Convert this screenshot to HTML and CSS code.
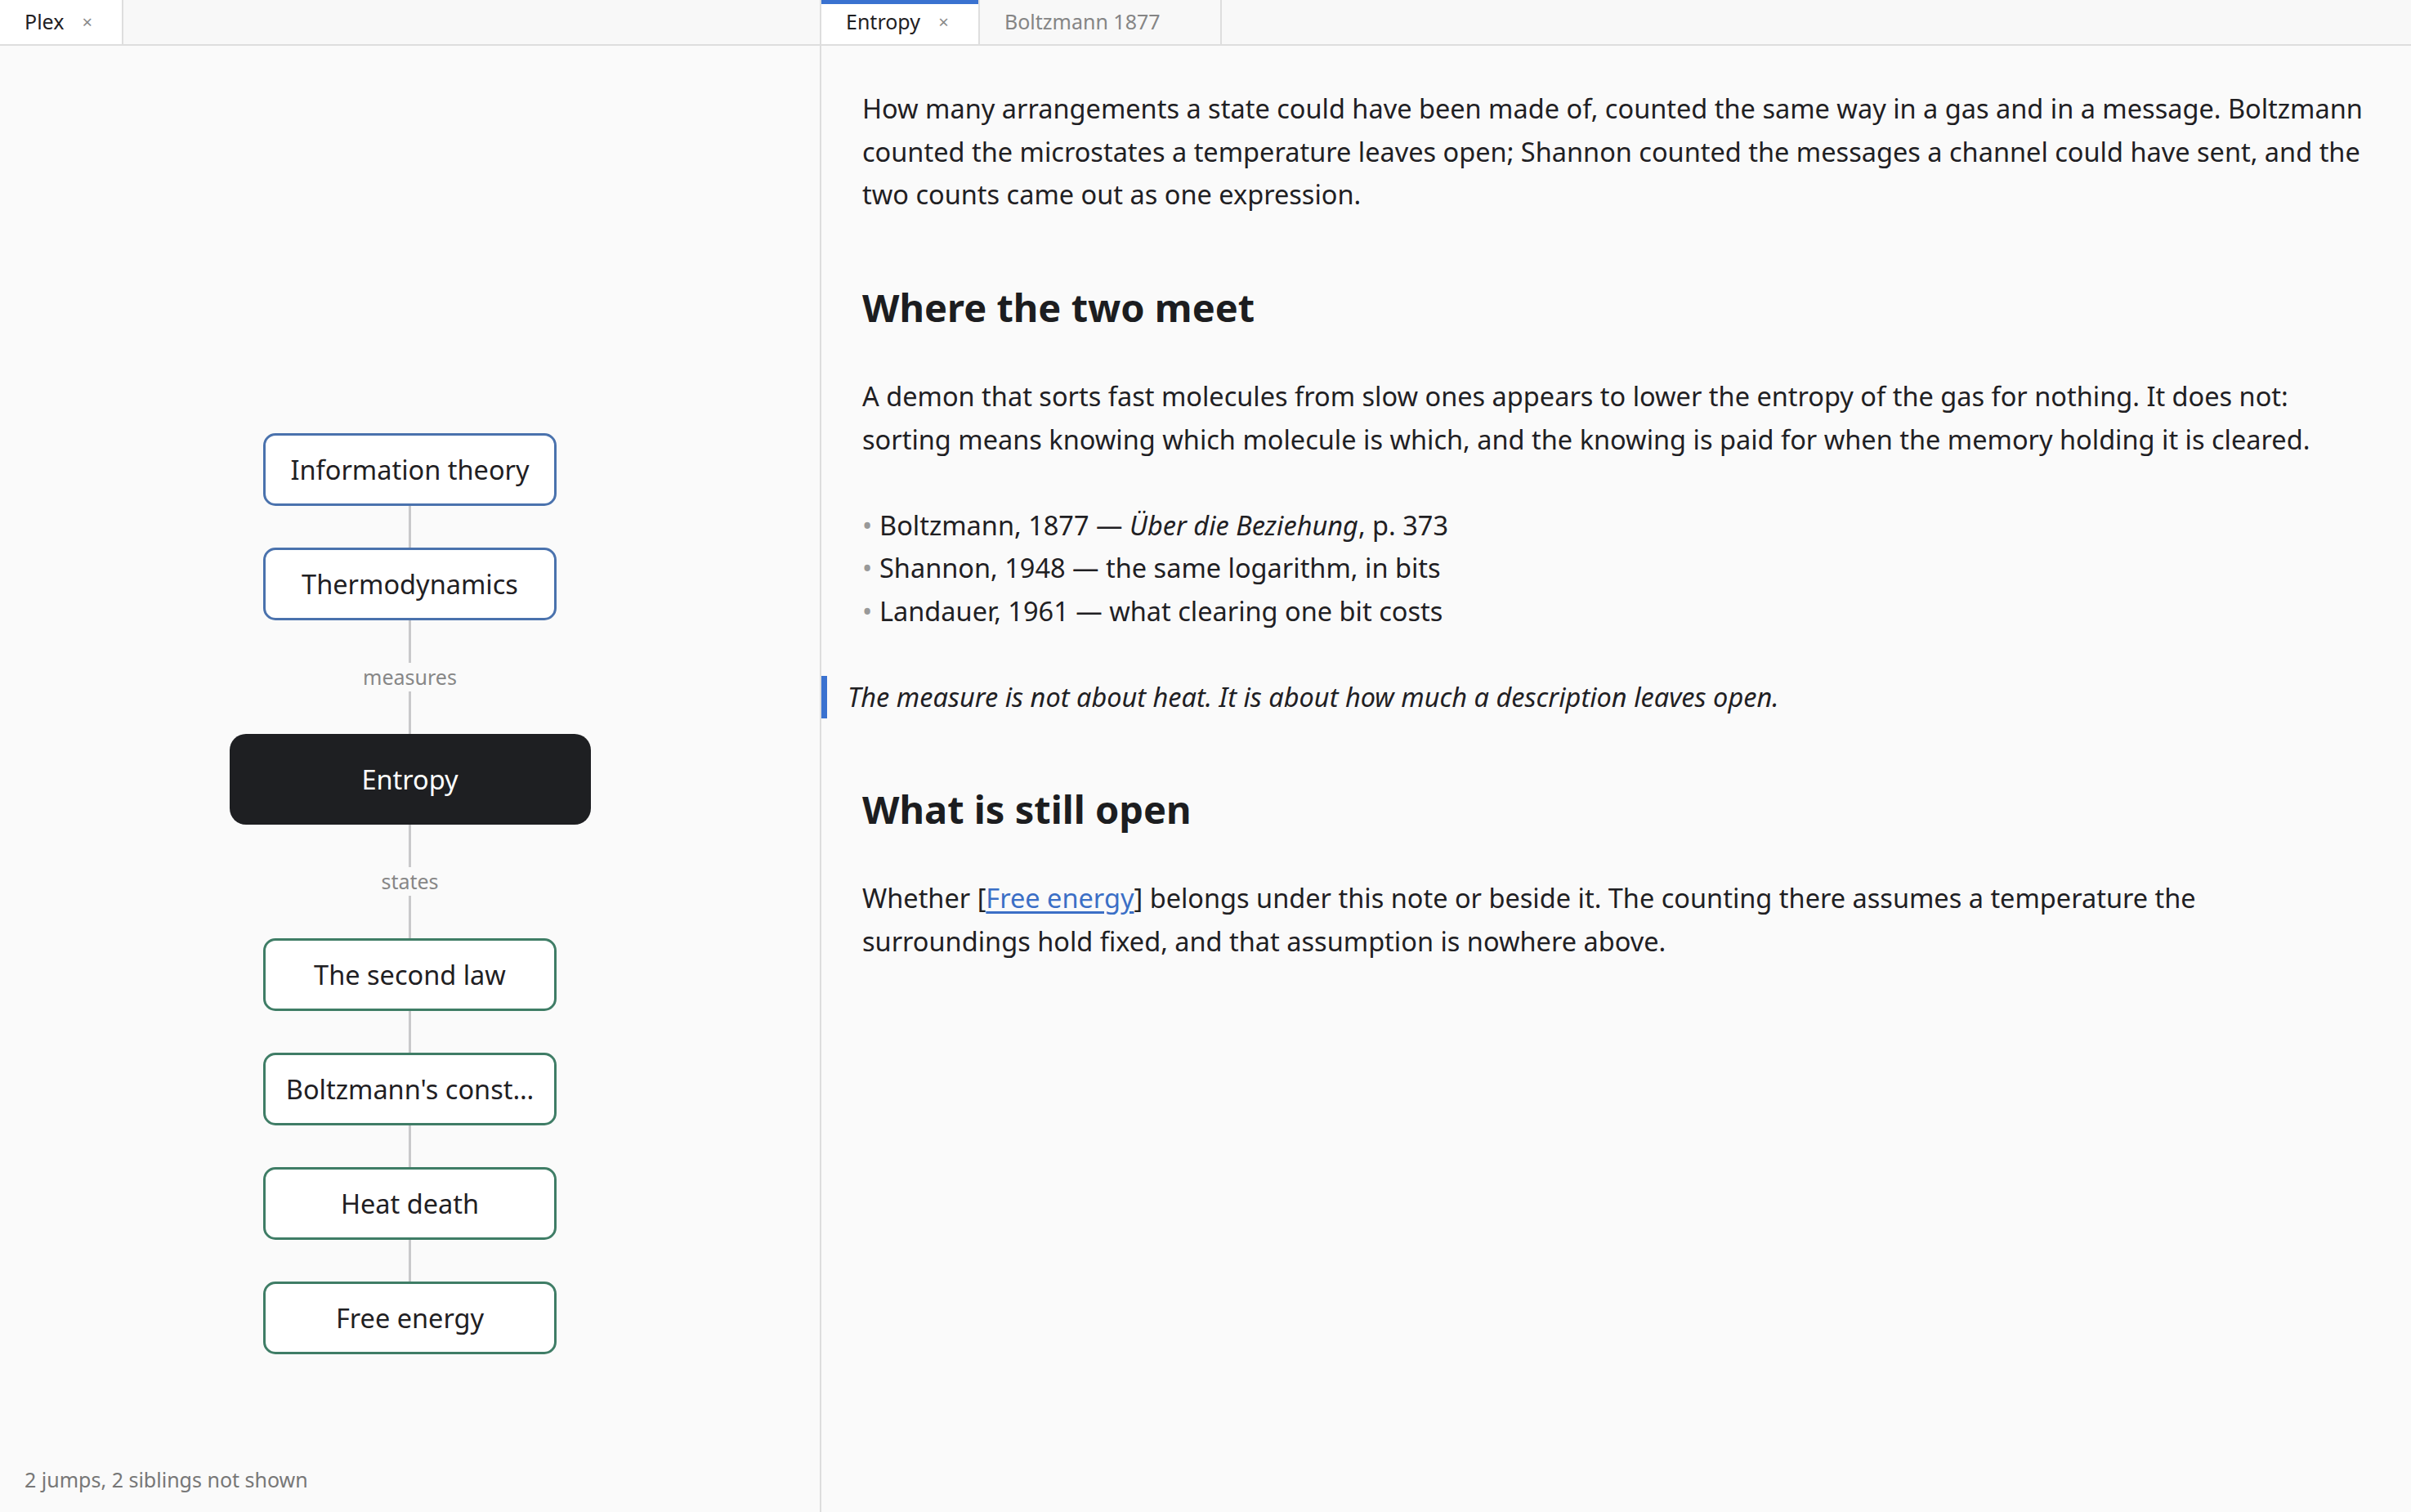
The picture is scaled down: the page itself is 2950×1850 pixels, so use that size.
FILE: index.html
```html
<!DOCTYPE html>
<html lang="en">
<head>
<meta charset="utf-8">
<title>Plex — Entropy</title>
<link rel="stylesheet" href="styles.css">
</head>
<body>
<div class="app">
  <aside class="pane pane-graph">
    <div class="tabbar">
      <div class="tab tab-open">
        <span class="tab-label">Plex</span>
        <span class="tab-close">×</span>
      </div>
    </div>
    <div class="graph">
      <div class="graph-up">
        <div class="node node-parent">Information theory</div>
        <div class="edge"></div>
        <div class="node node-parent">Thermodynamics</div>
        <div class="edge edge-long"></div>
        <div class="edge-label">measures</div>
        <div class="edge edge-long"></div>
      </div>
      <div class="graph-focus">
        <div class="node node-focus">Entropy</div>
      </div>
      <div class="graph-down">
        <div class="edge edge-long"></div>
        <div class="edge-label">states</div>
        <div class="edge edge-long"></div>
        <div class="node node-child">The second law</div>
        <div class="edge"></div>
        <div class="node node-child">Boltzmann's const…</div>
        <div class="edge"></div>
        <div class="node node-child">Heat death</div>
        <div class="edge"></div>
        <div class="node node-child">Free energy</div>
        <div class="graph-footer">2 jumps, 2 siblings not shown</div>
      </div>
    </div>
  </aside>
  <main class="pane pane-note">
    <div class="tabbar">
      <div class="tab tab-open tab-active">
        <span class="tab-label">Entropy</span>
        <span class="tab-close">×</span>
      </div>
      <div class="tab">
        <span class="tab-label">Boltzmann 1877</span>
        <span class="tab-close tab-close-hidden">×</span>
      </div>
    </div>
    <article class="note">
      <p>How many arrangements a state could have been made of, counted the same way in a gas and in a message. Boltzmann counted the microstates a temperature leaves open; Shannon counted the messages a channel could have sent, and the two counts came out as one expression.</p>
      <h2>Where the two meet</h2>
      <p>A demon that sorts fast molecules from slow ones appears to lower the entropy of the gas for nothing. It does not: sorting means knowing which molecule is which, and the knowing is paid for when the memory holding it is cleared.</p>
      <ul class="refs">
        <li><span class="bullet">•</span>Boltzmann, 1877 — <em>Über die Beziehung</em>, p. 373</li>
        <li><span class="bullet">•</span>Shannon, 1948 — the same logarithm, in bits</li>
        <li><span class="bullet">•</span>Landauer, 1961 — what clearing one bit costs</li>
      </ul>
      <blockquote>The measure is not about heat. It is about how much a description leaves open.</blockquote>
      <h2>What is still open</h2>
      <p>Whether [<a href="#" class="wikilink">Free energy</a>] belongs under this note or beside it. The counting there assumes a temperature the surroundings hold fixed, and that assumption is nowhere above.</p>
    </article>
  </main>
</div>
</body>
</html>
```
FILE: styles.css
```css
* { box-sizing: border-box; }

html, body {
  margin: 0;
  padding: 0;
  height: 100%;
}

body {
  font-family: "Noto Sans", "Open Sans", sans-serif;
  color: #1f2023;
  background: #fafafa;
}

.app {
  display: flex;
  height: 1850px;
  width: 2950px;
}

.pane {
  display: flex;
  flex-direction: column;
  height: 100%;
  background: #fafafa;
}

.pane-graph {
  width: 1005px;
  flex: 0 0 1005px;
  border-right: 2px solid #dddddd;
}

.pane-note {
  flex: 1 1 auto;
  min-width: 0;
}

/* tabs */
.tabbar {
  display: flex;
  height: 56px;
  flex: 0 0 56px;
  border-bottom: 2px solid #dedede;
  background: #f8f8f8;
}

.tab {
  display: flex;
  align-items: center;
  height: 100%;
  padding: 0 34px 2px 30px;
  border-right: 2px solid #dedede;
  font-size: 25px;
  color: #858585;
  background: #f8f8f8;
}

.tab + .tab { padding-right: 36px; }

.tab-open {
  background: #ffffff;
  color: #1f2023;
}

.tab-active {
  box-shadow: inset 0 5px 0 #3a72d0;
}

.tab-close {
  display: inline-block;
  width: 17px;
  margin-left: 20px;
  font-size: 22px;
  color: #8a8a8a;
  text-align: center;
}

.tab-close-hidden { visibility: hidden; }

/* graph */
.graph {
  flex: 1 1 auto;
  display: grid;
  grid-template-rows: 1fr auto 1fr;
  min-height: 0;
}

.graph-up,
.graph-down,
.graph-focus {
  display: flex;
  flex-direction: column;
  align-items: center;
}

.graph-up { justify-content: flex-end; }
.graph-down { justify-content: flex-start; }

.node {
  display: flex;
  align-items: center;
  justify-content: center;
  width: 359px;
  height: 89px;
  border-radius: 15px;
  background: #ffffff;
  font-size: 32.5px;
  color: #1f2023;
  white-space: nowrap;
}

.node-parent { border: 3px solid #4a72ad; }
.node-child { border: 3px solid #3f7d66; }

.node-focus {
  width: 442px;
  height: 111px;
  border-radius: 20px;
  background: #1e1f22;
  color: #ffffff;
}

.edge {
  width: 3px;
  height: 51px;
  background: #c9c9cb;
}

.edge-long { height: 52px; }

.edge-label {
  height: 35px;
  line-height: 35px;
  font-size: 25px;
  color: #878787;
}

.graph-footer {
  align-self: stretch;
  margin-top: auto;
  padding: 0 0 22px 30px;
  font-size: 25px;
  line-height: 35px;
  color: #777777;
}

/* note */
.note {
  flex: 1 1 auto;
  padding: 51px 55px 0 50px;
  font-size: 32.5px;
  line-height: 52.7px;
  color: #1f2023;
  overflow: hidden;
}

.note p {
  margin: 0 0 52px;
}

.note h2 {
  margin: 80px 0 52px;
  font-size: 47px;
  font-weight: 700;
  line-height: 62px;
  color: #1c1d20;
}

.refs {
  list-style: none;
  margin: 0 0 52px;
  padding: 0;
}

.refs li { margin: 0; }

.bullet {
  display: inline-block;
  width: 21px;
  color: #999999;
}

blockquote {
  margin: 0 0 52px -50px;
  padding-left: 25px;
  border-left: 7px solid #3a72d0;
  font-style: italic;
  color: #1f2023;
}

.wikilink {
  color: #3b6fc6;
  text-decoration: underline;
  text-underline-offset: 4px;
}
```
